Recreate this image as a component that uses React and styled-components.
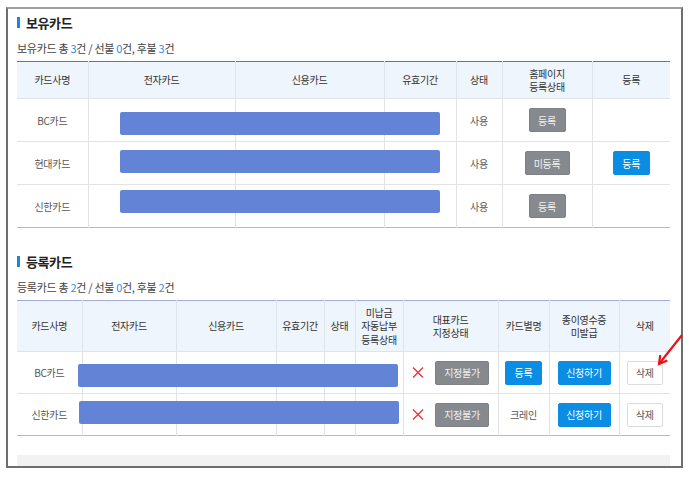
import React from "react"
import styled, { createGlobalStyle } from "styled-components"

const GlobalStyle = createGlobalStyle`
  html, body {
    margin: 0;
    padding: 0;
    background: #fff;
  }
  body {
    font-family: "Noto Sans CJK KR", "Noto Sans", sans-serif;
    color: #333;
  }
`

const Page = styled.div`
  position: relative;
  width: 695px;
  height: 477px;
  overflow: hidden;
`

const Frame = styled.div`
  box-sizing: border-box;
  margin: 7px 0 0 6px;
  width: 677px;
  height: 461px;
  border: 2px solid #6e6e6e;
  border-top-color: #a0a0a0;
  padding: 6px 11px 0 9px;
  overflow: hidden;
`

const SectionTitle = styled.h2`
  margin: ${props => (props.$first ? "0" : "26px")} 0 0;
  display: flex;
  align-items: center;
  gap: 6px;
  height: 14px;
  font-size: 13px;
  font-weight: 700;
  color: #222;
  letter-spacing: -0.4px;
  &::before {
    content: "";
    width: 3px;
    height: 11px;
    background: #1a86e0;
  }
`

const Summary = styled.p`
  margin: 12px 0 6px;
  font-size: 11px;
  line-height: 14px;
  color: #444;
  letter-spacing: -0.3px;
  b {
    font-weight: 400;
    color: #2b8de4;
  }
`

const Table = styled.table`
  width: 653px;
  border-collapse: collapse;
  table-layout: fixed;
  border-top: 1px solid ${props => props.$line};
  border-bottom: 1px solid #b8b8b8;
`

const Th = styled.th`
  background: #eef5fc;
  font-weight: 400;
  font-size: 10px;
  line-height: 13.5px;
  color: #333;
  height: ${props => props.$h}px;
  padding: 0;
  border-left: 1px solid #dde4ec;
  letter-spacing: -0.3px;
  &:first-child {
    border-left: none;
  }
`

const Td = styled.td`
  position: relative;
  height: ${props => props.$h}px;
  padding: 0;
  text-align: center;
  font-size: 10px;
  color: #555;
  letter-spacing: -0.3px;
  border-left: 1px solid #e3e3e3;
  border-top: 1px solid #e3e3e3;
  &:first-child {
    border-left: none;
  }
`

const Redact = styled.div`
  position: absolute;
  z-index: 1;
  left: ${props => props.$left}px;
  top: ${props => props.$top}px;
  width: 320px;
  height: 23px;
  background: #6383d7;
  border-radius: 2px;
`

const Cell = styled.div`
  display: flex;
  align-items: center;
  justify-content: center;
  gap: 11px;
`

const variants = {
  gray: "background: #86898d; border-color: #7d8084; color: #f2f2f2;",
  blue: "background: #0a8de2; border-color: #0a8de2; color: #fff;",
  white: "background: #fff; border-color: #dcdcdc; color: #555;",
}

const Btn = styled.button`
  box-sizing: border-box;
  display: inline-flex;
  align-items: center;
  justify-content: center;
  width: ${props => props.$w}px;
  height: 24px;
  padding: 0;
  border: 1px solid;
  border-radius: 2px;
  font-family: inherit;
  font-size: 10px;
  letter-spacing: -0.3px;
  vertical-align: middle;
  ${props => variants[props.$variant]}
`

const Footer = styled.div`
  margin-top: 19px;
  width: 653px;
  height: 40px;
  background: #f2f2f2;
`

const Arrow = styled.svg`
  position: absolute;
  left: 650px;
  top: 330px;
  width: 40px;
  height: 40px;
`

const Cross = () => (
  <svg width="12" height="11" viewBox="0 0 12 11">
    <path d="M1 0.5 L11 10.5 M11 0.5 L1 10.5" stroke="#e5383e" strokeWidth="1.4" fill="none" />
  </svg>
)

const owned = [
  { name: "BC카드", top: 13, home: ["gray", 37, "등록"], reg: null },
  { name: "현대카드", top: 8, home: ["gray", 45, "미등록"], reg: true },
  { name: "신한카드", top: 5, home: ["gray", 37, "등록"], reg: null },
]

const registered = [
  { name: "BC카드", left: -5, top: 12, alias: null },
  { name: "신한카드", left: -4, top: 7, alias: "크레인" },
]

const Multi = ({ lines }) =>
  lines.map((l, i) => (
    <React.Fragment key={i}>
      {i > 0 && <br />}
      {l}
    </React.Fragment>
  ))

const App = () => {
  return (
    <Page>
      <GlobalStyle />
      <Frame>
        <SectionTitle $first>보유카드</SectionTitle>
        <Summary>
          보유카드 총 <b>3</b>건 / 선불 <b>0</b>건, 후불 <b>3</b>건
        </Summary>
        <Table $line="#65759f">
          <colgroup>
            {[71, 147, 149, 72, 46, 90, 78].map((w, i) => (
              <col key={i} style={{ width: w }} />
            ))}
          </colgroup>
          <thead>
            <tr>
              <Th $h={36}>카드사명</Th>
              <Th>전자카드</Th>
              <Th>신용카드</Th>
              <Th>유효기간</Th>
              <Th>상태</Th>
              <Th>
                <Multi lines={["홈페이지", "등록상태"]} />
              </Th>
              <Th>등록</Th>
            </tr>
          </thead>
          <tbody>
            {owned.map(row => (
              <tr key={row.name}>
                <Td $h={42}>{row.name}</Td>
                <Td>
                  <Redact $left={31} $top={row.top} />
                </Td>
                <Td />
                <Td />
                <Td>사용</Td>
                <Td>
                  <Btn $variant={row.home[0]} $w={row.home[1]}>
                    {row.home[2]}
                  </Btn>
                </Td>
                <Td>
                  {row.reg && (
                    <Btn $variant="blue" $w={37}>
                      등록
                    </Btn>
                  )}
                </Td>
              </tr>
            ))}
          </tbody>
        </Table>

        <SectionTitle>등록카드</SectionTitle>
        <Summary>
          등록카드 총 <b>2</b>건 / 선불 <b>0</b>건, 후불 <b>2</b>건
        </Summary>
        <Table $line="#a3acd3">
          <colgroup>
            {[65, 94, 100, 48, 31, 48, 95, 51, 70, 51].map((w, i) => (
              <col key={i} style={{ width: w }} />
            ))}
          </colgroup>
          <thead>
            <tr>
              <Th $h={50}>카드사명</Th>
              <Th>전자카드</Th>
              <Th>신용카드</Th>
              <Th>유효기간</Th>
              <Th>상태</Th>
              <Th>
                <Multi lines={["미납금", "자동납부", "등록상태"]} />
              </Th>
              <Th>
                <Multi lines={["대표카드", "지정상태"]} />
              </Th>
              <Th>카드별명</Th>
              <Th>
                <Multi lines={["종이영수증", "미발급"]} />
              </Th>
              <Th>삭제</Th>
            </tr>
          </thead>
          <tbody>
            {registered.map(row => (
              <tr key={row.name}>
                <Td $h={41}>{row.name}</Td>
                <Td>
                  <Redact $left={row.left} $top={row.top} />
                </Td>
                <Td />
                <Td />
                <Td />
                <Td />
                <Td>
                  <Cell>
                    <Cross />
                    <Btn $variant="gray" $w={54}>
                      지정불가
                    </Btn>
                  </Cell>
                </Td>
                <Td>
                  {row.alias ? (
                    row.alias
                  ) : (
                    <Btn $variant="blue" $w={37}>
                      등록
                    </Btn>
                  )}
                </Td>
                <Td>
                  <Btn $variant="blue" $w={53}>
                    신청하기
                  </Btn>
                </Td>
                <Td>
                  <Btn $variant="white" $w={36}>
                    삭제
                  </Btn>
                </Td>
              </tr>
            ))}
          </tbody>
        </Table>
        <Footer />
      </Frame>
      <Arrow viewBox="0 0 40 40">
        <path d="M32 5 L9 34" stroke="#e5141b" strokeWidth="2.2" fill="none" />
        <path d="M10.3 25 L9 34 L17.3 30.5" stroke="#e5141b" strokeWidth="2.2" fill="none" />
      </Arrow>
    </Page>
  )
}

export default App
